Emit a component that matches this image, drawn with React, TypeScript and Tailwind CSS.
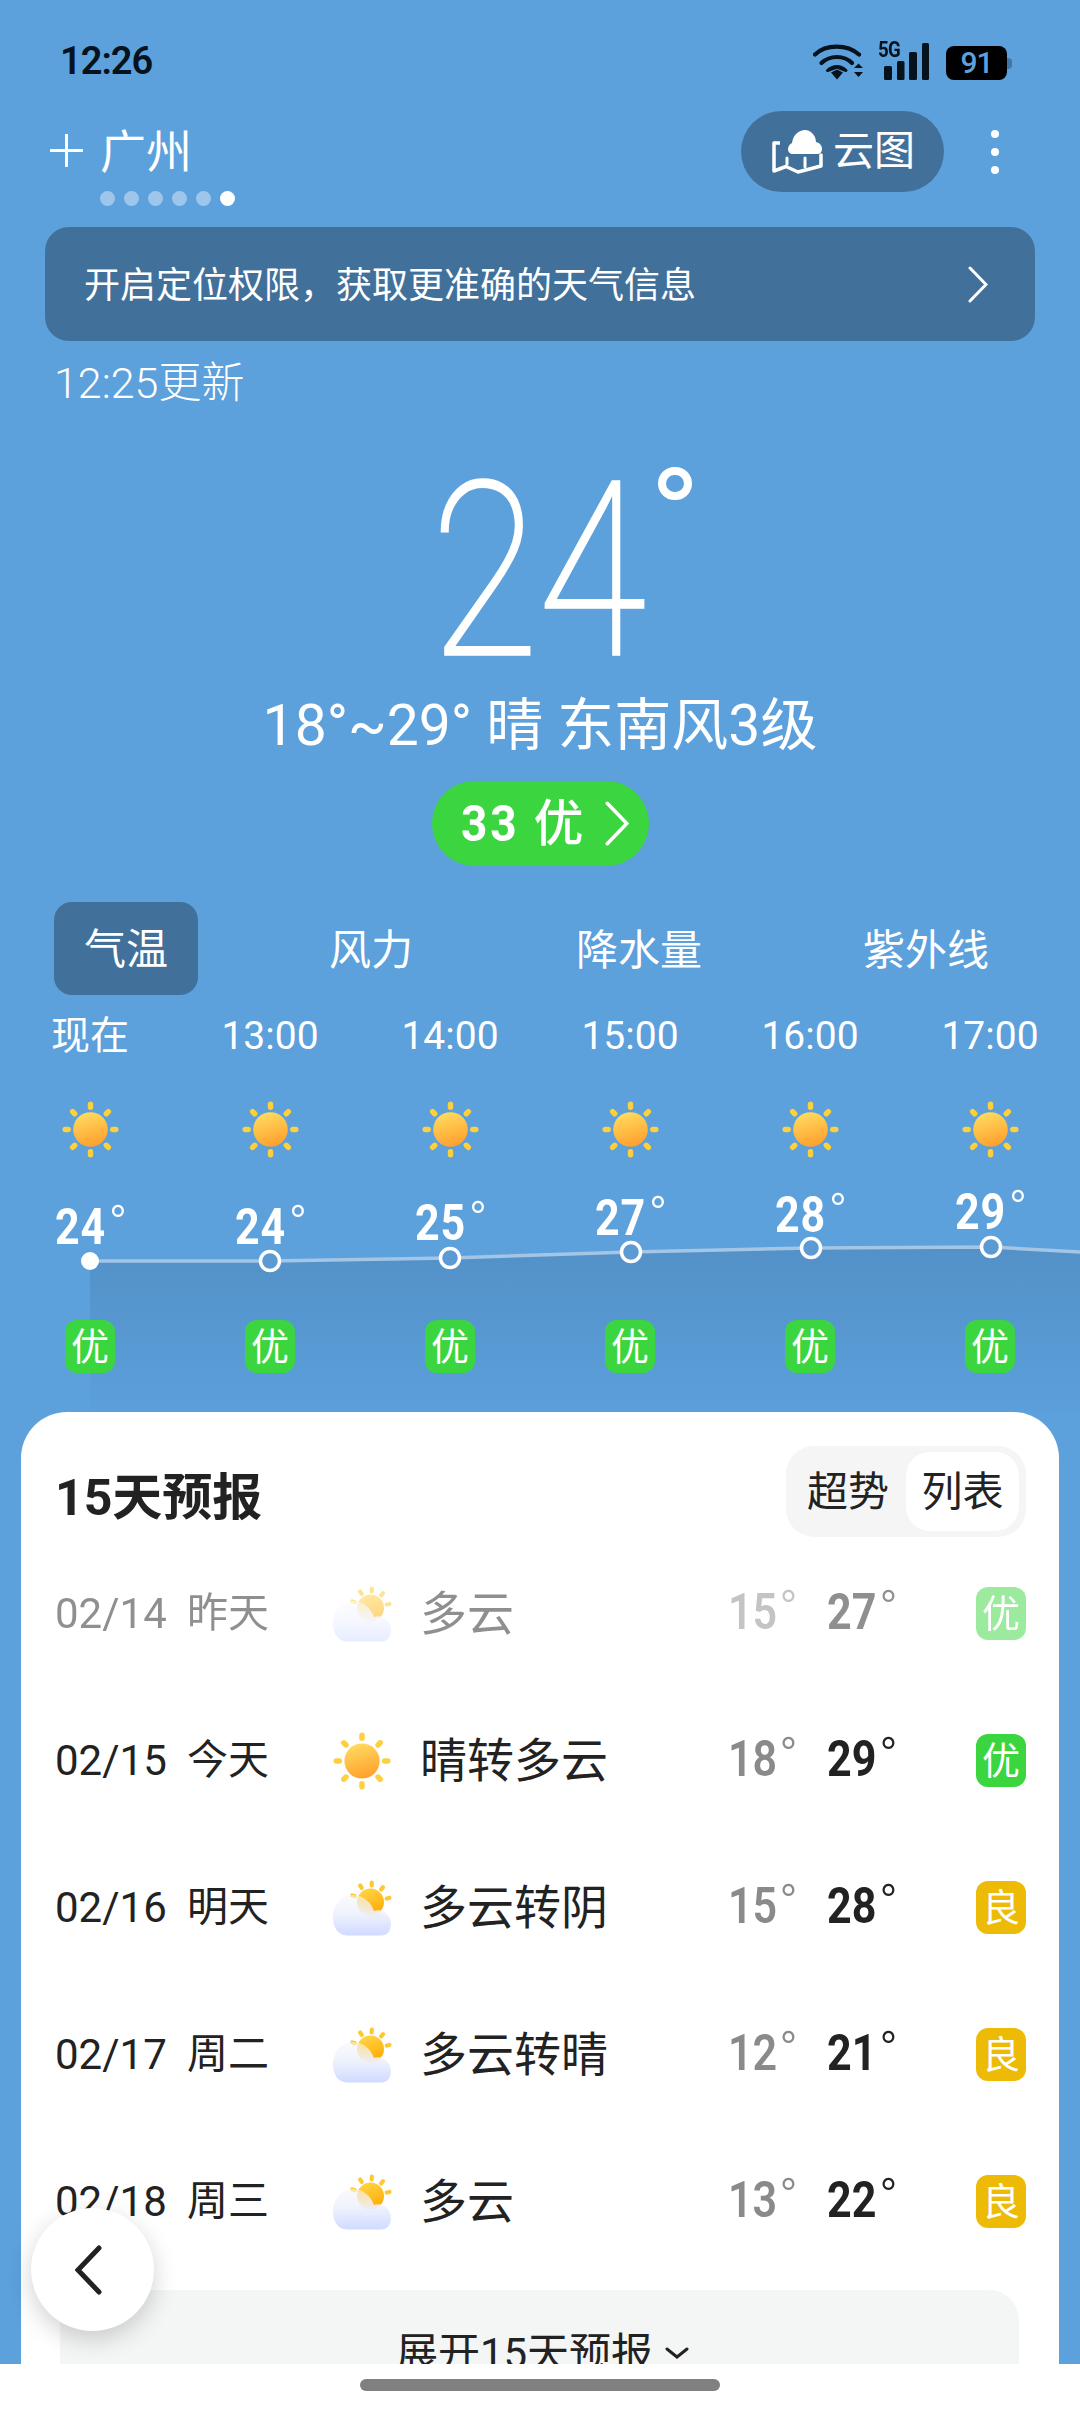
import React, { useId } from "react";

function Sun({ size = 57 }: { size?: number }) {
  const id = useId();
  const rays = [0, 45, 90, 135, 180, 225, 270, 315];
  return (
    <svg width={size} height={size} viewBox="0 0 57 57" className="shrink-0">
      <defs>
        <linearGradient id={id} x1="0.35" y1="0" x2="0.65" y2="1">
          <stop offset="0" stopColor="#ffdb5f" />
          <stop offset="1" stopColor="#ff9e2c" />
        </linearGradient>
      </defs>
      {rays.map((r) => (
        <rect key={r} x="25.8" y="0.5" width="5.4" height="8.4" rx="2.7" fill="#fdd03f" transform={`rotate(${r} 28.5 28.5)`} />
      ))}
      <circle cx="28.5" cy="28.5" r="17.3" fill={`url(#${id})`} />
    </svg>
  );
}

function CloudSun() {
  const id = useId();
  const rays = [-70, -32, 4, 40, 78];
  return (
    <svg width="60" height="56" viewBox="0 0 60 56" className="shrink-0">
      <defs>
        <linearGradient id={`${id}s`} x1="0" y1="0" x2="0.4" y2="1">
          <stop offset="0" stopColor="#ffd94e" />
          <stop offset="1" stopColor="#ffae08" />
        </linearGradient>
        <linearGradient id={`${id}c`} x1="0" y1="0" x2="0" y2="1">
          <stop offset="0" stopColor="#f5f6fb" stopOpacity="0.55" />
          <stop offset="0.45" stopColor="#eef1fd" stopOpacity="0.92" />
          <stop offset="1" stopColor="#cfdaff" />
        </linearGradient>
        <filter id={`${id}b`} x="-10%" y="-10%" width="120%" height="120%">
          <feGaussianBlur stdDeviation="0.5" />
        </filter>
      </defs>
      {rays.map((r) => (
        <rect key={r} x="35.4" y="0.5" width="4.2" height="7" rx="2.1" fill="#fdc92f" transform={`rotate(${r} 37.5 22)`} />
      ))}
      <circle cx="37.5" cy="22" r="13.5" fill={`url(#${id}s)`} />
      <path
        d="M14 55.5C5 55.5 0 47 0 38C0 25 8 15 20 15C30 15 38 22 41 31C50 28 58 36 58 44C58 51 54 55.500 48 55.500Z"
        fill={`url(#${id}c)`}
        filter={`url(#${id}b)`}
      />
    </svg>
  );
}

function Chevron({ w, h, sw, color = "white", left = false }: { w: number; h: number; sw: number; color?: string; left?: boolean }) {
  const pad = sw / 2 + 0.5;
  const pts = left
    ? `${w - pad},${pad} ${pad},${h / 2} ${w - pad},${h - pad}`
    : `${pad},${pad} ${w - pad},${h / 2} ${pad},${h - pad}`;
  return (
    <svg width={w} height={h} viewBox={`0 0 ${w} ${h}`} className="shrink-0">
      <polyline points={pts} fill="none" stroke={color} strokeWidth={sw} strokeLinecap="round" strokeLinejoin="miter" />
    </svg>
  );
}

function StatusBar() {
  return (
    <div className="h-[111px] pl-[60px] pr-[68px] pt-[38px] flex items-start justify-between">
      <span className="text-[38px] leading-[46px] font-semibold text-[#06121c] tracking-[-1px]">12:26</span>
      <div className="flex items-start pt-[5px] -ml-1">
        <svg width="50" height="37" viewBox="0 0 50 37" className="text-[#06121c] mr-[15px]">
          <g fill="none" stroke="currentColor" strokeWidth="4.2" strokeLinecap="round">
            <path d="M2 11.500C13 1 34 1 46 11.500" />
            <path d="M8.500 20C17 12 31 12 39 20" />
          </g>
          <path d="M14.500 27.500C20 22 28 22 33 27.500L24 24Z" fill="currentColor" stroke="currentColor" strokeWidth="3" strokeLinejoin="round" />
          <path d="M18 29.500L24 26.500L30 29.500L24 36.500Z" fill="currentColor" />
          <path d="M41 25L45.500 20.500L50 25ZM41 29L50 29L45.500 34Z" fill="currentColor" />
        </svg>
        <div className="relative w-[51px] h-[37px] mr-[17px]">
          <span className="absolute left-0 -top-[4px] text-[22px] leading-[22px] font-bold text-[#06121c] tracking-[-1px] scale-x-[0.85] origin-left">5G</span>
          <svg width="51" height="37" viewBox="0 0 51 37" className="text-[#06121c]">
            <rect x="6" y="23" width="8" height="14" rx="1.500" fill="currentColor" />
            <rect x="19" y="18" width="7.500" height="19" rx="1.500" fill="currentColor" />
            <rect x="31" y="9" width="8" height="28" rx="1.500" fill="currentColor" />
            <rect x="44" y="0" width="7" height="37" rx="1.500" fill="currentColor" />
          </svg>
        </div>
        <div className="flex items-center mt-[3px]">
          <div className="w-[61px] h-[34px] rounded-[8px] bg-black flex items-center justify-center text-[#5ca0dc] text-[30px] leading-none font-medium tracking-[-1px]">91</div>
          <div className="w-[5px] h-[11px] rounded-r-[4px] bg-[#3f76a5]" />
        </div>
      </div>
    </div>
  );
}

function Header() {
  return (
    <div className="h-[116px] pl-[50px] pr-[81px] flex items-start justify-between">
      <div className="flex flex-col">
        <div className="flex items-center h-[78px] gap-[17px]">
          <svg width="33" height="33" viewBox="0 0 33 33">
            <path d="M1 16.500H32M16.500 1V32" stroke="white" strokeWidth="3" strokeLinecap="round" />
          </svg>
          <span className="text-[46px] leading-none text-white font-normal mt-[3px]">广州</span>
        </div>
        <div className="flex ml-[50px] gap-[9px] mt-[2px]">
          {[0, 1, 2, 3, 4].map((i) => (
            <div key={i} className="w-[15px] h-[15px] rounded-full bg-white/40" />
          ))}
          <div className="w-[15px] h-[15px] rounded-full bg-white" />
        </div>
      </div>
      <div className="flex items-center">
        <div className="w-[203px] h-[81px] rounded-full bg-[#41719b] flex items-center pl-[31px] gap-[10px]">
          <svg width="51" height="44" viewBox="0 0 51 44" className="shrink-0">
            <path d="M2 13V41L14 36.500L26 42L49 36V25" fill="none" stroke="white" strokeWidth="3.500" strokeLinejoin="round" strokeLinecap="round" />
            <path d="M8 13L2 13" stroke="white" strokeWidth="3.500" />
            <path d="M21 24C18 24 16 22 16 19C16 16 18 14 20 13C21 5 27 0 33 0C39 0 44 6 44 12C48 13 50 16 50 19C50 22 48 24 45 24Z" fill="white" />
            <path d="M33 28V37" stroke="white" strokeWidth="3" strokeLinecap="round" />
            <path d="M15 28V34" stroke="white" strokeWidth="3" strokeLinecap="round" />
          </svg>
          <span className="text-[41px] leading-none text-white font-normal">云图</span>
        </div>
        <div className="ml-[47px] flex flex-col gap-[10px]">
          <div className="w-[8px] h-[8px] rounded-full bg-white" />
          <div className="w-[8px] h-[8px] rounded-full bg-white" />
          <div className="w-[8px] h-[8px] rounded-full bg-white" />
        </div>
      </div>
    </div>
  );
}

function Banner() {
  return (
    <div className="mx-[45px] h-[114px] rounded-[24px] bg-[#41719b] flex items-center justify-between pl-[39px] pr-[47px]">
      <span className="text-[36px] leading-none text-white font-normal mt-[3px]">开启定位权限，获取更准确的天气信息</span>
      <Chevron w={20} h={37} sw={3} />
    </div>
  );
}

function Current() {
  return (
    <>
      <div className="h-[82px] pl-[54px] flex items-center text-[43px] leading-none text-white font-light pt-[3px]">12:25更新</div>
      <div className="h-[265px] relative flex justify-center">
        <div className="relative w-[240px] h-[265px] flex justify-center">
          <span className="absolute left-[11px] top-[48px] text-[242px] leading-[200px] font-thin text-white scale-x-[0.81] origin-left [-webkit-text-stroke:3.500px_white]">24</span>
          <div className="absolute left-[238px] top-[44px] w-[34px] h-[33px] rounded-full border-[8px] border-white" />
        </div>
      </div>
      <div className="h-[74px] flex items-center justify-center text-[57px] leading-none text-white font-normal whitespace-pre">18°~29° 晴 东南风3级</div>
      <div className="pt-[19px] flex justify-center">
        <div className="w-[217px] h-[85px] rounded-full bg-[#3bd63f] flex items-center pl-[29px] text-white">
          <span className="w-[55px] text-[50px] leading-none font-bold tracking-[3px] scale-x-[0.92] origin-left">33</span>
          <span className="text-[50px] leading-none font-medium ml-[18px]">优</span>
          <span className="ml-[21px]"><Chevron w={24} h={45} sw={3.500} /></span>
        </div>
      </div>
    </>
  );
}

function Tabs() {
  return (
    <div className="pt-[36px] h-[129px] relative flex items-center text-[42px] leading-none text-white font-normal">
      <div className="ml-[54px] w-[144px] h-[93px] rounded-[18px] bg-[#41719b] flex items-center justify-center pt-[3px]">气温</div>
      <div className="ml-[131px] w-[84px] text-center pt-[5px] whitespace-nowrap">风力</div>
      <div className="ml-[163px] w-[126px] text-center pt-[5px]">降水量</div>
      <div className="ml-[161px] w-[126px] text-center pt-[5px]">紫外线</div>
    </div>
  );
}

const hours = [
  { label: "现在", temp: 24, lift: 0 },
  { label: "13:00", temp: 24, lift: 0 },
  { label: "14:00", temp: 25, lift: 4 },
  { label: "15:00", temp: 27, lift: 9 },
  { label: "16:00", temp: 28, lift: 12 },
  { label: "17:00", temp: 29, lift: 15 },
];

function Chart() {
  const xs = [90, 270, 450, 631, 811, 991];
  const ys = [266, 266, 263, 257, 253, 252];
  const line = xs.map((x, i) => `${x},${ys[i]}`).join(" ") + " 1080,257";
  return (
    <svg width="1080" height="417" viewBox="0 0 1080 417" className="absolute left-0 top-0">
      <defs>
        <linearGradient id="areaFill" x1="0" y1="0" x2="0" y2="1">
          <stop offset="0" stopColor="#5391c7" />
          <stop offset="1" stopColor="#5b9fdb" />
        </linearGradient>
      </defs>
      <polygon points={`90,266 ${line} 1080,417 90,417`} fill="url(#areaFill)" />
      <polyline points={line} fill="none" stroke="#a3c5e6" strokeWidth="3.500" />
      <circle cx={xs[0]} cy={ys[0]} r="9" fill="white" />
      {xs.slice(1).map((x, i) => (
        <circle key={x} cx={x} cy={ys[i + 1]} r="9.500" fill="#5b9ad2" stroke="white" strokeWidth="3.500" />
      ))}
    </svg>
  );
}

function Hourly() {
  return (
    <div className="relative h-[417px] -mt-[36px] pt-[36px] box-content">
      <div className="absolute left-0 top-[36px]"><Chart /></div>
      <div className="relative grid grid-cols-6">
        {hours.map((h, i) => (
          <div key={i} className="flex flex-col items-center text-white">
            <div className="h-[80px] flex items-center text-[39px] leading-none font-normal pt-[2px]">{h.label}</div>
            <div className="mt-[26px]"><Sun /></div>
            <div className="h-[162px]">
              <div className="flex items-start pl-[2px]" style={{ paddingTop: 44 - h.lift }}>
                <span className="w-[51px] text-[50px] leading-[50px] font-bold tracking-[1px] scale-x-[0.86] origin-left">{h.temp}</span>
                <span className="text-[50px] leading-[50px] font-light ml-[3px] -mt-[3px]">°</span>
              </div>
            </div>
            <div className="w-[50px] h-[53px] rounded-[12px] bg-[#3bd63f] flex items-center justify-center text-[38px] leading-none font-normal">优</div>
          </div>
        ))}
      </div>
    </div>
  );
}

const days = [
  { d: "02/14", w: "昨天", sun: false, t: "多云", lo: 15, hi: 27, aq: "优", dim: true },
  { d: "02/15", w: "今天", sun: true, t: "晴转多云", lo: 18, hi: 29, aq: "优", dim: false },
  { d: "02/16", w: "明天", sun: false, t: "多云转阴", lo: 15, hi: 28, aq: "良", dim: false },
  { d: "02/17", w: "周二", sun: false, t: "多云转晴", lo: 12, hi: 21, aq: "良", dim: false },
  { d: "02/18", w: "周三", sun: false, t: "多云", lo: 13, hi: 22, aq: "良", dim: false },
];

function Row({ r }: { r: (typeof days)[number] }) {
  return (
    <div className={`h-[147px] flex items-center text-[#222222] ${r.dim ? "opacity-50" : ""}`}>
      <span className="w-[132px] text-[42px] leading-none font-normal">{r.d}</span>
      <span className="w-[146px] text-[41px] leading-none font-normal">{r.w}</span>
      <span className="w-[87px] flex">{r.sun ? <Sun size={58} /> : <CloudSun />}</span>
      <span className="w-[308px] text-[47px] leading-none font-normal">{r.t}</span>
      <span className="w-[99px] flex items-start text-[#8a8a8a] -mt-[4px]">
        <span className="w-[49px] text-[50px] leading-[50px] font-semibold scale-x-[0.86] origin-left">{r.lo}</span>
        <span className="text-[50px] leading-[50px] font-light ml-[2px] -mt-[3px]">°</span>
      </span>
      <span className="w-[149px] flex items-start -mt-[4px]">
        <span className="w-[50px] text-[50px] leading-[50px] font-bold scale-x-[0.86] origin-left">{r.hi}</span>
        <span className="text-[50px] leading-[50px] font-light ml-[2px] -mt-[3px]">°</span>
      </span>
      <span className={`w-[50px] h-[53px] rounded-[12px] flex items-center justify-center text-[38px] leading-none text-white font-normal ${r.aq === "优" ? "bg-[#3bd63f]" : "bg-[#edbb06]"}`}>{r.aq}</span>
    </div>
  );
}

function Card() {
  return (
    <div className="mx-[21px] mt-0 rounded-t-[46px] bg-white pt-[34px] pl-[34px] pr-[33px] h-[1000px]">
      <div className="flex items-center justify-between h-[91px]">
        <span className="text-[50px] leading-none font-bold text-[#222222] mt-[12px]">15天预报</span>
        <div className="w-[240px] h-[91px] rounded-[28px] bg-[#f5f5f5] flex items-center text-[41px] leading-none text-[#222222] font-normal">
          <span className="ml-[21px] w-[82px] pt-[2px]">超势</span>
          <span className="ml-[17px] w-[113px] h-[79px] rounded-[24px] bg-white flex items-center justify-center pt-[2px]">列表</span>
        </div>
      </div>
      <div className="mt-[3px]">
        {days.map((r) => (
          <Row key={r.d} r={r} />
        ))}
      </div>
      <div className="mt-[15px] ml-[5px] mr-[7px] h-[120px] rounded-t-[30px] bg-[#f4f5f5] flex items-start justify-center pt-[43px] pl-[6px] text-[#222222]">
        <span className="text-[42px] leading-none font-normal">展开15天预报</span>
        <span className="ml-[12px] mt-[14px]">
          <svg width="24" height="12" viewBox="0 0 24 12">
            <polyline points="2,2 12,10 22,2" fill="none" stroke="#222222" strokeWidth="3" strokeLinecap="round" />
          </svg>
        </span>
      </div>
    </div>
  );
}

export default function App() {
  return (
    <div className="relative w-[1080px] h-[2412px] overflow-hidden flex flex-col bg-white font-['Roboto','Noto_Sans_CJK_SC',sans-serif]">
      <div className="h-[2364px] bg-[#5ca0dc] overflow-hidden">
        <StatusBar />
        <Header />
        <Banner />
        <Current />
        <Tabs />
        <Hourly />
        <Card />
      </div>
      <div className="h-[48px] bg-white flex justify-center pt-[15px]">
        <div className="w-[360px] h-[12px] rounded-full bg-[#808080]" />
      </div>
      <div className="absolute left-[31px] top-[2208px] w-[123px] h-[123px] rounded-full bg-white shadow-[0_8px_24px_rgba(0,0,0,0.18)] flex items-center justify-center pr-[9px]">
        <Chevron w={27} h={50} sw={5} color="#222222" left />
      </div>
    </div>
  );
}
